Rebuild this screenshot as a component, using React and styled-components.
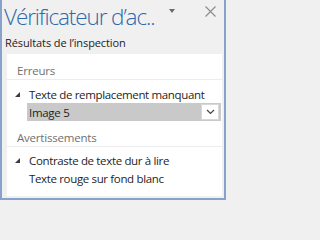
import React from 'react';
import styled, { createGlobalStyle } from 'styled-components';

const Global = createGlobalStyle`
  html, body { margin: 0; padding: 0; }
  body {
    font-family: 'Open Sans', 'Noto Sans', sans-serif;
    background: #f0f0f0;
  }
`;

const Pane = styled.div`
  width: 226px;
  height: 200px;
  box-sizing: border-box;
  background: #f0f0f0;
  border: 2px solid #87a3cb;
  border-top: none;
  display: flex;
  flex-direction: column;
  overflow: hidden;
`;

const TitleBar = styled.div`
  display: flex;
  align-items: center;
  height: 33px;
  padding-left: 2px;
`;

const Title = styled.div`
  flex: 1;
  font-size: 22.5px;
  line-height: 30px;
  font-weight: 300;
  color: #2d69ab;
  white-space: nowrap;
  letter-spacing: -1.1px;
`;

const MenuArrow = styled.div`
  width: 0;
  height: 0;
  border-left: 3.5px solid transparent;
  border-right: 3.5px solid transparent;
  border-top: 4px solid #6b6b6b;
  margin-right: 30px;
  margin-top: -12px;
`;

const CloseButton = styled.div`
  width: 11px;
  height: 11px;
  margin-right: 8px;
  margin-top: -10px;
  display: flex;
`;

const Caption = styled.div`
  font-size: 11px;
  line-height: 16px;
  color: #222;
  padding: 2px 0 0 3px;
  height: 19px;
  box-sizing: border-box;
  letter-spacing: -0.1px;
`;

const Results = styled.div`
  flex: 1;
  background: #fff;
  margin: 2px 2px 2px 5px;
  display: flex;
  flex-direction: column;
`;

const Group = styled.div`
  font-size: 11.5px;
  line-height: 17px;
  color: #707070;
  padding: ${p => p.$top}px 0 0 10px;
  height: 17px;
  letter-spacing: -0.2px;
  border-bottom: 1px solid #ececec;
`;

const Issue = styled.div`
  display: flex;
  align-items: center;
  font-size: 11.5px;
  color: #1e1e1e;
  height: 18px;
  white-space: nowrap;
  letter-spacing: -0.35px;
  padding-left: ${p => (p.$child ? 22 : 8)}px;
  margin-top: ${p => p.$gap || 0}px;
`;

const Expander = styled.span`
  flex: none;
  width: 0;
  height: 0;
  border-left: 5px solid transparent;
  border-bottom: 5px solid #3c3c3c;
  margin-right: 9px;
  margin-top: 1px;
`;

const Selected = styled.div`
  display: flex;
  align-items: center;
  justify-content: space-between;
  margin: 0 1px 0 20px;
  height: 18px;
  background: #c9c9c9;
  font-size: 11.5px;
  letter-spacing: -0.3px;
  color: #1e1e1e;
  padding-left: 2px;
`;

const DropButton = styled.div`
  width: 18px;
  height: 16px;
  background: #fff;
  border: 1px solid #d8d8d8;
  box-sizing: border-box;
  margin-right: 2px;
  display: flex;
  align-items: center;
  justify-content: center;
`;

export default function App() {
  return (
    <>
      <Global />
      <Pane>
        <TitleBar>
          <Title>Vérificateur d’ac..</Title>
          <MenuArrow />
          <CloseButton>
            <svg width="11" height="11" viewBox="0 0 11 11">
              <path d="M0.5 0.5 L10.5 10.5 M10.5 0.5 L0.5 10.5" stroke="#8a8a8a" strokeWidth="1.1" fill="none" />
            </svg>
          </CloseButton>
        </TitleBar>
        <Caption>Résultats de l’inspection</Caption>
        <Results>
          <Group $top={8}>Erreurs</Group>
          <Issue $gap={5}>
            <Expander />
            Texte de remplacement manquant
          </Issue>
          <Selected>
            Image 5
            <DropButton>
              <svg width="9" height="6" viewBox="0 0 9 6">
                <path d="M1 1 L4.5 4.5 L8 1" stroke="#444" strokeWidth="1.2" fill="none" />
              </svg>
            </DropButton>
          </Selected>
          <Group $top={8}>Avertissements</Group>
          <Issue $gap={4}>
            <Expander />
            Contraste de texte dur à lire
          </Issue>
          <Issue $child>Texte rouge sur fond blanc</Issue>
        </Results>
      </Pane>
    </>
  );
}
